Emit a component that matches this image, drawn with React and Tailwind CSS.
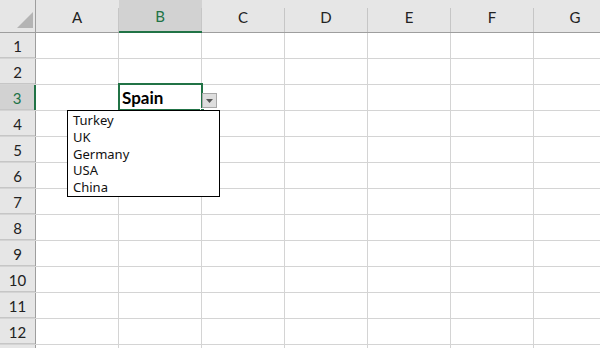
import React from 'react';

const COLS = ['A', 'B', 'C', 'D', 'E', 'F', 'G'];
const ROWS = [1, 2, 3, 4, 5, 6, 7, 8, 9, 10, 11, 12, 13];
const OPTIONS = ['Turkey', 'UK', 'Germany', 'USA', 'China'];

const headFont = { fontFamily: 'Lato, "Open Sans", sans-serif' };

const ColumnHeader = ({ label, active }) => (
  <div
    className={`w-[83px] shrink-0 h-[33px] flex border-b ${
      active ? 'bg-[#d2d2d2] border-b-2 border-[#217346]' : 'bg-[#e6e6e6] border-[#9e9e9e]'
    }`}
  >
    <div
      className={`flex-1 flex items-center justify-center pt-[2px] text-[15px] ${
        active ? 'text-[#217346]' : 'text-[#222]'
      }`}
    >
      {label}
    </div>
    <div className="w-px mt-[8px] bg-[#c6c6c6]" />
  </div>
);

const Cell = ({ children }) => (
  <div className="relative w-[83px] shrink-0 h-full border-r border-[#d4d4d4]">{children}</div>
);

const DataValidationCell = () => (
  <Cell>
    {/* active cell */}
    <div className="absolute left-[-1px] top-[-2px] w-[85px] h-[28px] border-2 border-[#217346] z-10 flex items-center pl-[2px]">
      <span
        className="text-[17px] font-bold text-black leading-none pt-[1px]"
        style={{ fontFamily: 'Lato, "Open Sans", sans-serif' }}
      >
        Spain
      </span>
      <span className="absolute right-[-4px] bottom-[-4px] w-[5px] h-[5px] bg-[#217346] border border-white" />
    </div>
    {/* dropdown arrow */}
    <div className="absolute left-[83px] top-[8px] w-[15px] h-[15px] bg-[#dedede] border border-[#a8a8a8] z-10 flex items-center justify-center">
      <svg width="7" height="4" viewBox="0 0 7 4">
        <polygon points="0,0 7,0 3.5,4" fill="#555" />
      </svg>
    </div>
    {/* list */}
    <div
      className="absolute left-[-52px] top-[25px] w-[153px] h-[87px] bg-white border border-black z-20 pl-[5px] pt-[1px] text-[13px] leading-[16.8px] text-[#111]"
      style={{ fontFamily: '"Noto Sans", "Open Sans", sans-serif' }}
    >
      {OPTIONS.map((o) => (
        <div key={o}>{o}</div>
      ))}
    </div>
  </Cell>
);

export default function App() {
  return (
    <div className="w-[600px] h-[348px] overflow-hidden bg-white" style={headFont}>
      {/* header row */}
      <div className="flex">
        <div className="w-[36px] shrink-0 h-[33px] bg-[#e6e6e6] border-b border-r border-[#9e9e9e] relative">
          <svg className="absolute left-0 top-0" width="36" height="32" viewBox="0 0 36 32">
            <polygon points="33,12 33,28 17,28" fill="#b4b4b4" />
          </svg>
        </div>
        {COLS.map((c) => (
          <ColumnHeader key={c} label={c} active={c === 'B'} />
        ))}
      </div>

      {ROWS.map((r) => (
        <div key={r} className="flex h-[26px] border-b border-[#d4d4d4]">
          <div
            className={`w-[36px] shrink-0 h-full flex items-center justify-center text-[15px] pt-[1px] ${
              r === 3
                ? 'bg-[#d2d2d2] text-[#217346] border-r-2 border-[#217346]'
                : 'bg-[#e6e6e6] text-[#222] border-r border-[#9e9e9e]'
            }`}
            style={{ boxShadow: 'inset 0 -1px 0 #c6c6c6' }}
          >
            {r < 13 ? r : ''}
          </div>
          {COLS.map((c) =>
            c === 'B' && r === 3 ? <DataValidationCell key={c} /> : <Cell key={c} />
          )}
        </div>
      ))}
    </div>
  );
}
